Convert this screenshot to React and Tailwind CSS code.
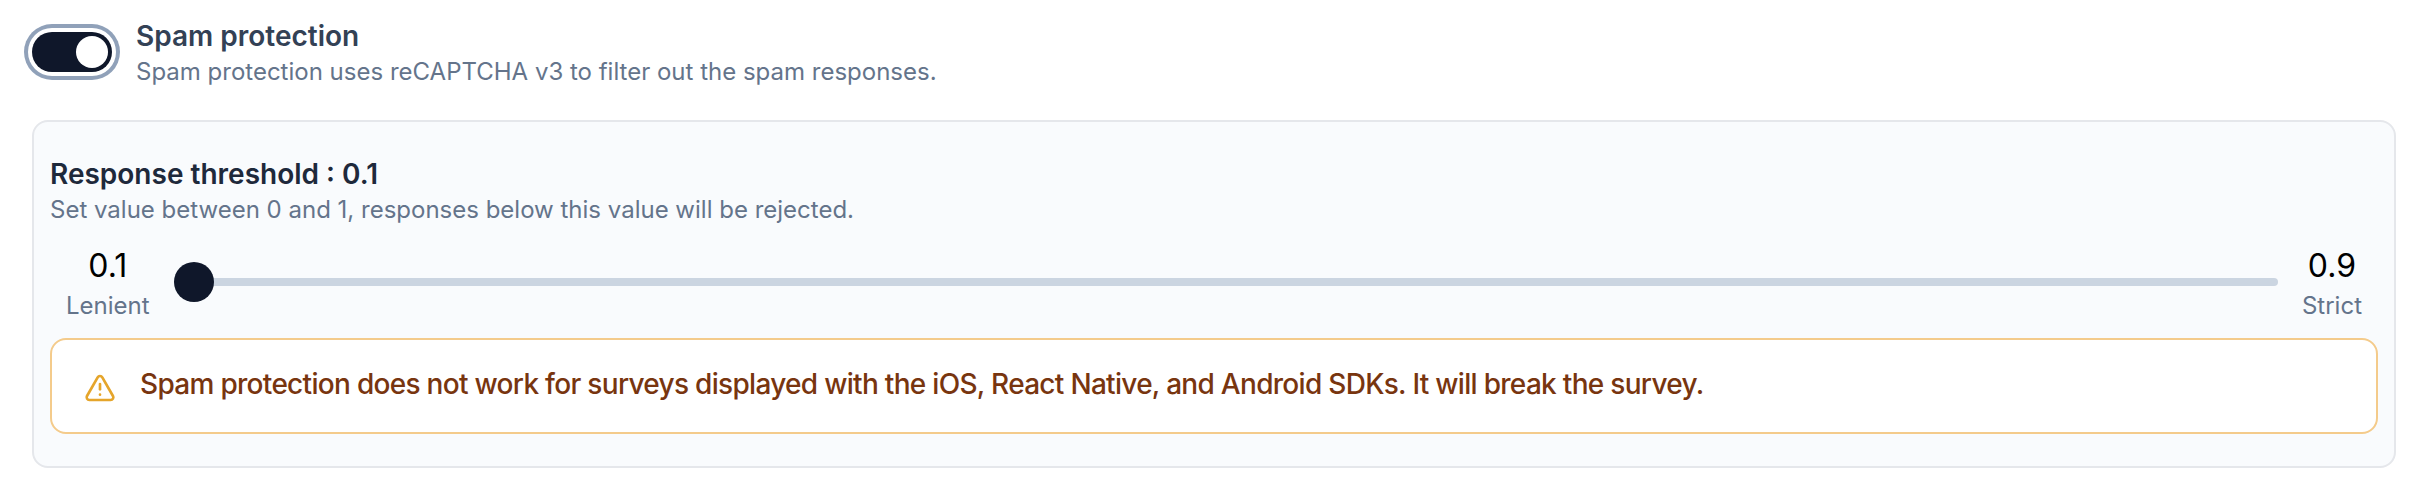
import { useState } from 'react';
import { TriangleAlert } from 'lucide-react';

function Switch({ id, checked, onChange }) {
  return (
    <button
      id={id}
      type="button"
      role="switch"
      aria-checked={checked}
      onClick={() => onChange(!checked)}
      className={`flex h-10 w-20 shrink-0 items-center rounded-full p-1 ring-4 ring-slate-400 ring-offset-4 ring-offset-white outline-none ${checked ? 'justify-end bg-[#0f172a]' : 'justify-start bg-slate-200'}`}
    >
      <span className="h-8 w-8 rounded-full bg-white"></span>
    </button>
  );
}

function App() {
  const [enabled, setEnabled] = useState(true);
  const [threshold, setThreshold] = useState(0.1);

  return (
    <div className="bg-white px-8 py-4 font-['Inter',sans-serif]">
      {/* Toggle row */}
      <div className="flex items-center gap-6">
        <Switch id="spam-protection" checked={enabled} onChange={setEnabled} />
        <div>
          <label htmlFor="spam-protection" className="block text-[28px] leading-10 font-semibold text-[#334155]">
            Spam protection
          </label>
          <p className="text-2xl leading-8 text-[#64748b]">
            Spam protection uses reCAPTCHA v3 to filter out the spam responses.
          </p>
        </div>
      </div>

      {enabled && (
        <section className="mt-8 rounded-2xl border-2 border-[#e5e7eb] bg-[#f9fbfd] px-4 py-8">
          <label htmlFor="threshold" className="block text-[28px] leading-10 font-semibold text-[#1e293b]">
            Response threshold : {threshold}
          </label>
          <p className="text-2xl leading-8 text-[#64748b]">
            Set value between 0 and 1, responses below this value will be rejected.
          </p>

          {/* Threshold slider */}
          <div className="flex items-center gap-6 p-4">
            <div className="text-center">
              <p className="text-[32px] leading-12 text-black">0.1</p>
              <p className="text-2xl leading-8 text-[#64748b]">Lenient</p>
            </div>
            <input
              id="threshold"
              type="range"
              min="0.1"
              max="0.9"
              step="0.1"
              value={threshold}
              onChange={(e) => setThreshold(Number(e.target.value))}
              className="h-10 min-w-0 flex-1 cursor-pointer appearance-none bg-transparent outline-none [&::-webkit-slider-runnable-track]:h-2 [&::-webkit-slider-runnable-track]:rounded-full [&::-webkit-slider-runnable-track]:bg-[#cbd5e1] [&::-webkit-slider-thumb]:-mt-4 [&::-webkit-slider-thumb]:h-10 [&::-webkit-slider-thumb]:w-10 [&::-webkit-slider-thumb]:appearance-none [&::-webkit-slider-thumb]:rounded-full [&::-webkit-slider-thumb]:bg-[#0f172a]"
            />
            <div className="text-center">
              <p className="text-[32px] leading-12 text-black">0.9</p>
              <p className="text-2xl leading-8 text-[#64748b]">Strict</p>
            </div>
          </div>

          {/* Warning */}
          <div role="alert" className="flex items-start gap-6 rounded-2xl border-2 border-[#f4cb8b] bg-white px-8 pt-6 pb-7">
            <TriangleAlert className="mt-2 h-8 w-8 shrink-0 text-[#e5a52b]" />
            <p className="text-[28px] leading-10 font-medium tracking-tight text-[#78350f]">
              Spam protection does not work for surveys displayed with the iOS, React Native, and Android SDKs. It will break the survey.
            </p>
          </div>
        </section>
      )}
    </div>
  );
}

export default App;
